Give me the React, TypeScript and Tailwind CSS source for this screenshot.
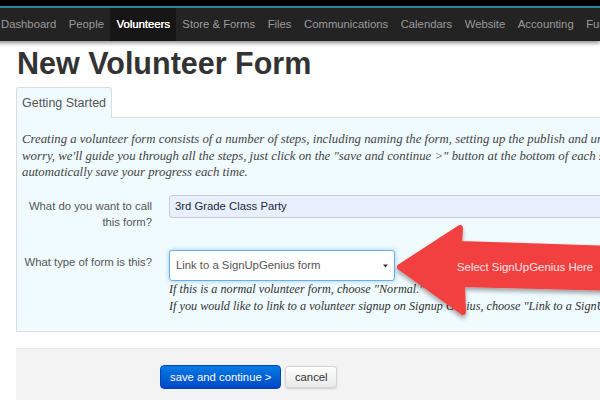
import React from "react";

const NAV = [
  "Dashboard",
  "People",
  "Volunteers",
  "Store & Forms",
  "Files",
  "Communications",
  "Calendars",
  "Website",
  "Accounting",
  "Fundraising",
];

export default function App() {
  return (
    <div className="relative w-[600px] h-[400px] overflow-hidden bg-white font-['Liberation_Sans',Arial,sans-serif]">
      <div className="h-[6px] bg-black" />
      <div className="h-[2px] bg-[#2b8a9b]" />
      <div className="relative z-10 h-[33px] bg-[#232323] flex items-stretch whitespace-nowrap shadow-[0_2px_4px_rgba(0,0,0,0.45)] -ml-[5.25px]">
        {NAV.map((n) => (
          <div
            key={n}
            className={
              n === "Volunteers"
                ? "flex items-center px-[6.25px] text-[11.3px] bg-[#161616] text-white [text-shadow:0.4px_0_0_#fff]"
                : "flex items-center px-[6.25px] text-[11.3px] text-[#9b9b9b]"
            }
          >
            {n}
          </div>
        ))}
      </div>

      <h1 className="mt-[6px] ml-[17px] text-[30.5px] leading-[33px] font-bold text-[#333] whitespace-nowrap">
        New Volunteer Form
      </h1>

      <div className="ml-[16px] w-[620px] mt-[7px]">
        <div className="flex">
          <div className="relative z-[1] -mb-px h-[31px] px-[5px] flex items-center border border-b-0 border-[#ddd] rounded-t-[3px] bg-[#f0fbff] text-[12.5px] text-[#555]">
            Getting Started
          </div>
        </div>
        <div className="border border-r-0 border-[#ddd] bg-[#f0fbff] pt-[13px] pb-[16px] pl-[5px]">
          <div className="font-['Liberation_Serif',serif] italic text-[12.8px] leading-[16.5px] text-[#444] whitespace-nowrap">
            <div>
              Creating a volunteer form consists of a number of steps, including naming the form, setting up the publish and unpublish dates, and more. Don't
            </div>
            <div>
              worry, we'll guide you through all the steps, just click on the "save and continue &gt;" button at the bottom of each screen and we'll
            </div>
            <div>automatically save your progress each time.</div>
          </div>

          <div className="flex items-start mt-[14px]">
            <div className="w-[130px] pt-[3.5px] text-right text-[11.3px] leading-[16px] text-[#555]">
              What do you want to call
              <br />
              this form?
            </div>
            <div className="ml-[17px] flex-1 h-[23px] bg-[#e8f0fe] border border-[#ccc] rounded-[3px] pl-[5px] flex items-center text-[11.3px] text-[#1c1f3a]">
              3rd Grade Class Party
            </div>
          </div>

          <div className="flex items-start mt-[20px]">
            <div className="w-[130px] pt-[4px] text-right text-[11.3px] leading-[16px] text-[#555] whitespace-nowrap">
              What type of form is this?
            </div>
            <div className="ml-[17px] w-[226px] h-[31px] border border-[#66afe9] rounded-[3px] bg-white shadow-[0_0_5px_rgba(102,175,233,0.6)] flex items-center justify-between pl-[6px] pr-[6px] text-[11.3px] text-[#555]">
              <span>Link to a SignUpGenius form</span>
              <svg width="5" height="4" viewBox="0 0 5 4">
                <path d="M0 0.5H5L2.5 3.5Z" fill="#333" />
              </svg>
            </div>
          </div>

          <div className="ml-[147px] font-['Liberation_Serif',serif] italic text-[12.2px] leading-[17px] text-[#333] whitespace-nowrap">
            <div>If this is a normal volunteer form, choose "Normal."</div>
            <div>
              If you would like to link to a volunteer signup on Signup Genius, choose "Link to a SignUpGenius form".
            </div>
          </div>
        </div>
      </div>

      <div className="mt-[16px] ml-[16px] w-[620px] h-[60px] bg-[#f3f3f3] border-t border-[#e6e6e6] pt-[16px] pl-[144px] flex items-start gap-[4px]">
        <div className="h-[24px] px-[9px] flex items-center rounded-[4px] bg-linear-to-b from-[#0b7be6] to-[#0046c6] border border-[#0048b5] text-white text-[11.3px] whitespace-nowrap">
          save and continue &gt;
        </div>
        <div className="h-[22px] mt-[1px] px-[8.5px] flex items-center rounded-[3px] bg-linear-to-b from-white to-[#e9e9e9] border border-[#d4d4d4] text-[#333] text-[11.3px] shadow-[0_1px_2px_rgba(0,0,0,0.15)]">
          cancel
        </div>
      </div>

      <svg
        className="absolute left-0 top-0 pointer-events-none"
        width="600"
        height="400"
        viewBox="0 0 600 400"
      >
        <defs>
          <filter id="sh" x="-20%" y="-20%" width="140%" height="160%">
            <feDropShadow dx="0" dy="3" stdDeviation="2" floodColor="#000" floodOpacity="0.35" />
          </filter>
        </defs>
        <path
          d="M400 267 L460 228 L459 244 L615 249 L615 288 L462 284 L463 312 Z"
          fill="#f2403f"
          stroke="#f2403f"
          strokeWidth="6"
          strokeLinejoin="round"
          filter="url(#sh)"
        />
      </svg>
      <div className="absolute left-[457px] top-[259px] text-[11.4px] leading-[16px] text-[#fde4e4] whitespace-nowrap">
        Select SignUpGenius Here
      </div>
    </div>
  );
}
